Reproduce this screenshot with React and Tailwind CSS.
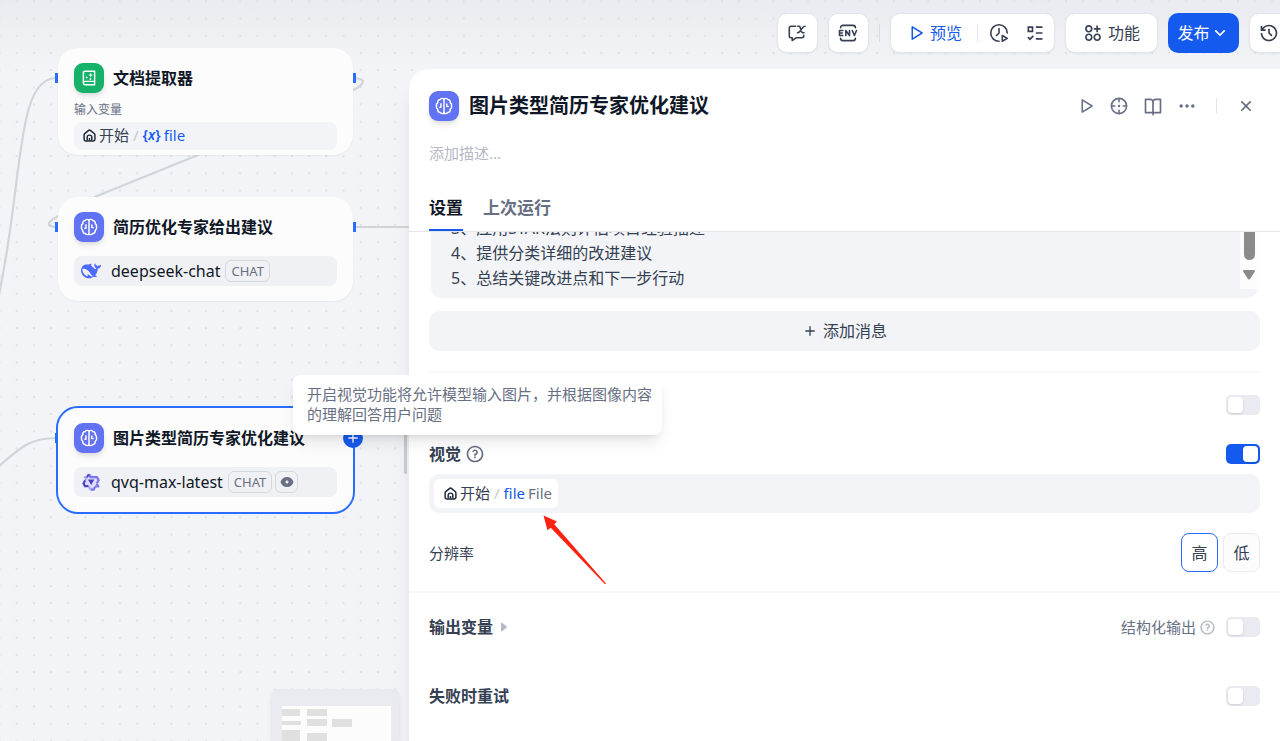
import { useState } from 'react'
import {
  RiAddLine,
  RiApps2AddLine,
  RiArrowDownSLine,
  RiBookOpenLine,
  RiCloseLine,
  RiHistoryLine,
  RiListCheck3,
  RiMoreFill,
  RiPlayLargeLine,
  RiQuestionLine,
} from 'react-icons/ri'

const prompt = `3、应用STAR法则评估项目经验描述
4、提供分类详细的改进建议
5、总结关键改进点和下一步行动`

function LlmIcon() {
  return (
    <span className="flex size-[30px] shrink-0 items-center justify-center rounded-[9px] bg-[#6172f3] text-white shadow-md">
      <svg viewBox="0 0 16 16" className="size-[18px]" fill="none" stroke="currentColor" strokeWidth="1.3" strokeLinecap="round" strokeLinejoin="round">
        <path d="M8 1.900C7 .9 5.300 1 4.600 2.300 3.200 2.400 2.200 3.600 2.500 5 1.500 5.700 1 6.800 1.300 8c-.3 1.200.2 2.300 1.200 3-.3 1.400.7 2.600 2.100 2.700.7 1.300 2.400 1.400 3.400.4 1 1 2.700.9 3.400-.4 1.400-.1 2.400-1.300 2.100-2.700 1-.7 1.500-1.800 1.200-3 .3-1.200-.2-2.300-1.200-3 .3-1.400-.7-2.600-2.100-2.700C10.700 1 9 .9 8 1.900Z" />
        <path d="M8 2v12M5.300 6v3.200H4.300M10.500 6.300v2.200h1.200" />
      </svg>
    </span>
  )
}

function DocIcon() {
  return (
    <span className="flex size-[30px] shrink-0 items-center justify-center rounded-[9px] bg-[#17b26a] text-white shadow-md">
      <svg viewBox="0 0 16 16" className="size-[18px]" fill="none" stroke="currentColor" strokeWidth="1.3" strokeLinejoin="round">
        <path d="M3 12.300V3.200C3 2.500 3.500 2 4.200 2H13v12H4.500C3.700 14 3 13.300 3 12.300c0-.8.7-1.300 1.500-1.300H13" />
        <path d="M9.500 3.300l.6 1.500 1.500.6-1.500.6-.6 1.500-.6-1.500-1.500-.6 1.500-.6zM6 6.300l.4.900.9.4-.9.400L6 8.900l-.4-.9-.9-.4.900-.4z" fill="currentColor" stroke="none" />
        <circle cx="9.300" cy="8.900" r=".8" fill="currentColor" stroke="none" />
      </svg>
    </span>
  )
}

function HomeIcon() {
  return (
    <svg viewBox="0 0 14 14" className="size-[13px] text-[#1d2939]" fill="none" stroke="currentColor" strokeWidth="1.600" strokeLinejoin="round">
      <path d="M1.200 6.400c0-.6.2-1.100.7-1.500l3.900-3.200c.7-.6 1.700-.6 2.400 0l3.900 3.200c.5.4.7.9.7 1.500v4.900c0 1-.6 1.500-1.500 1.500H2.700c-.9 0-1.500-.5-1.500-1.500z" />
      <path d="M4.500 12.500V9c0-1.400 1-2.400 2.500-2.400S9.500 7.600 9.500 9v3.500M7 9.800v2.700" />
    </svg>
  )
}

function DeepseekIcon() {
  return (
    <svg viewBox="0 0 24 24" className="size-5 text-[#4d6bfe]" fill="currentColor">
      <path fillRule="evenodd" d="M23.748 4.482c-.254-.124-.364.113-.512.234-.051.039-.094.09-.137.136-.372.397-.806.657-1.373.626-.829-.046-1.537.214-2.163.848-.133-.782-.575-1.248-1.247-1.548-.352-.156-.708-.311-.955-.65-.172-.241-.219-.51-.305-.774-.055-.16-.11-.323-.293-.35-.2-.031-.278.136-.356.276-.313.572-.434 1.202-.422 1.84.027 1.436.633 2.58 1.838 3.393.137.093.172.187.129.323-.082.28-.18.552-.266.833-.055.179-.137.217-.329.14a5.526 5.526 0 01-1.736-1.18c-.857-.828-1.631-1.742-2.597-2.458a11.365 11.365 0 00-.689-.471c-.985-.957.13-1.743.388-1.836.27-.098.093-.432-.779-.428-.872.004-1.67.295-2.687.684a3.055 3.055 0 01-.465.137 9.597 9.597 0 00-2.883-.102c-1.885.21-3.39 1.102-4.497 2.623C.082 8.606-.231 10.684.152 12.85c.403 2.284 1.569 4.175 3.36 5.653 1.858 1.533 3.997 2.284 6.438 2.14 1.482-.085 3.133-.284 4.994-1.86.47.234.962.327 1.78.397.63.059 1.236-.03 1.705-.128.735-.156.684-.837.419-.961-2.155-1.004-1.682-.595-2.113-.926 1.096-1.296 2.746-2.642 3.392-7.003.05-.347.007-.565 0-.845-.004-.17.035-.237.23-.256a4.173 4.173 0 001.545-.475c1.396-.763 1.96-2.015 2.093-3.517.02-.23-.004-.467-.247-.588zM11.581 18c-2.089-1.642-3.102-2.183-3.52-2.16-.392.024-.321.471-.235.763.09.288.207.486.371.739.114.167.192.416-.113.603-.673.416-1.842-.14-1.897-.167-1.361-.802-2.5-1.86-3.301-3.307-.774-1.393-1.224-2.887-1.298-4.482-.02-.386.093-.522.477-.592a4.696 4.696 0 011.529-.039c2.132.312 3.946 1.265 5.468 2.774.868.86 1.525 1.887 2.202 2.891.72 1.066 1.494 2.082 2.48 2.914.348.292.625.514.891.677-.802.09-2.14.11-3.054-.614z" />
    </svg>
  )
}

function QwenIcon() {
  return (
    <svg viewBox="0 0 20 20" className="size-5" fill="none" strokeLinejoin="round">
      <path d="M7.500 1.800 5.700 5H2.200l1.700 3.300L2 11.500l1.700 3h3.500l1.900 3.500h3.500l1.600-3.300h3.500l-1.800-3.200 2-3.300-1.800-3h-3.600L10.800 2z" fill="#dddcf8" />
      <path d="M8 2.200 9.500 5.200h6.600l1.600 3-2 3.300M9.400 17.700h3.200l1.600-3M14.200 14.500h3.200l-1.700-3" stroke="#7a74ee" strokeWidth="2.200" />
      <path d="M2.800 5.200h3.100L4.200 8.300 2.500 11.500l1.500 2.800h3.500l1.900 3.400" stroke="#a5a1f2" strokeWidth="1.800" />
      <path d="M7.800 2.200 6 5.200M4 8.500l-1.500 3L4 14.300l3.300-.2" stroke="#4a3fc4" strokeWidth="2" />
      <path d="M7 7.600h6.300L10.200 13z" fill="#4a3fc4" />
    </svg>
  )
}

function VisionBadge() {
  return (
    <span className="flex h-[22px] w-[23px] items-center justify-center rounded-md border border-[#d5d8df]">
      <svg viewBox="0 0 14 14" className="size-[14px]">
        <path d="M7 2C3.800 2 1.300 4 .5 7c.8 3 3.300 5 6.500 5s5.700-2 6.500-5C12.700 4 10.200 2 7 2Z" fill="#676f83" />
        <path d="M7 4.800 7.700 6.300 9.200 7l-1.500.7L7 9.200l-.7-1.500L4.800 7l1.500-.7Z" fill="#fff" />
      </svg>
    </span>
  )
}

function Handle({ className }) {
  return <span className={`absolute h-[10px] w-[3px] bg-[#296dff] ${className}`} />
}

function NodeTitle({ icon, children }) {
  return (
    <div className="flex items-center gap-[9px]">
      {icon}
      <h3 className="text-[16px] leading-5 font-semibold text-[#101828]">{children}</h3>
    </div>
  )
}

function ModelRow({ icon, name, children }) {
  return (
    <div className="mt-[14px] flex h-[30px] items-center rounded-lg bg-[#f0f1f5] pl-[7px]">
      {icon}
      <span className="ml-[10px] text-[16px] leading-5 text-[#101828]">{name}</span>
      <span className="ml-[5px] flex gap-[3px]">
        <span className="flex h-[22px] items-center rounded-md border border-[#d5d8df] px-[5px] text-[13px] leading-4 text-[#676f83]">CHAT</span>
        {children}
      </span>
    </div>
  )
}

function Canvas() {
  return (
    <div className="absolute inset-0 overflow-hidden">
      <div className="h-[69px] bg-linear-to-b from-[#e9ebf0] to-[#f2f4f7]" />
      <svg className="absolute inset-0 size-full" fill="none">
        <defs>
          <pattern id="dots" x="8.100" y="-7.300" width="17.200" height="17.200" patternUnits="userSpaceOnUse">
            <circle cx="8.600" cy="8.600" r="1.200" fill="#dfe1e7" />
          </pattern>
        </defs>
        <rect width="100%" height="100%" fill="url(#dots)" />
        <g stroke="#d0d5dc" strokeWidth="2.200">
          <path d="M56 78C14 78 24 190-4 308" />
          <path d="M355 78C372 80 360 88 335 99L198 155 97 196 65 213C44 222 46 227 56 227" />
          <path d="M355 227H420" />
          <path d="M-2 467C20 448 30 438 56 438" />
        </g>
      </svg>

      <div className="absolute top-[48px] left-[58px] w-[295px] rounded-[20px] bg-[#fcfcfd] px-4 pt-[15px] pb-[5px] shadow-xs">
        <Handle className="top-[25px] -left-[3px]" />
        <Handle className="top-[25px] -right-[3px]" />
        <NodeTitle icon={<DocIcon />}>文档提取器</NodeTitle>
        <div className="mt-2 text-[12px] leading-[18px] text-[#676f83]">输入变量</div>
        <div className="mt-[3px] flex h-[28px] items-center rounded-lg bg-[#f2f4f7] pb-[2px] pl-[9px] text-[15px] leading-5">
          <HomeIcon />
          <span className="ml-[3px] text-[#354052]">开始</span>
          <span className="mx-1 text-[#c3c8d1]">/</span>
          <span className="text-[14px] font-semibold text-[#155aef]">{'{'}<i>x</i>{'}'}</span>
          <span className="ml-[3px] text-[#155aef]">file</span>
        </div>
      </div>

      <div className="absolute top-[197px] left-[58px] w-[295px] rounded-[20px] bg-[#fcfcfd] px-4 py-[15px] shadow-xs">
        <Handle className="top-[25px] -left-[3px]" />
        <Handle className="top-[25px] -right-[3px]" />
        <NodeTitle icon={<LlmIcon />}>简历优化专家给出建议</NodeTitle>
        <ModelRow icon={<DeepseekIcon />} name="deepseek-chat" />
      </div>

      <div className="absolute top-[406px] left-[56px] w-[299px] rounded-[22px] border-2 border-[#296dff] bg-[#fcfcfd] px-4 py-[15px]">
        <Handle className="top-[25px] -left-[3px]" />
        <button aria-label="添加节点" className="absolute top-[20px] -right-[10px] flex size-5 items-center justify-center rounded-full bg-[#155aef] text-white">
          <RiAddLine className="size-4" />
        </button>
        <NodeTitle icon={<LlmIcon />}>图片类型简历专家优化建议</NodeTitle>
        <ModelRow icon={<QwenIcon />} name="qvq-max-latest">
          <VisionBadge />
        </ModelRow>
      </div>

      <svg className="absolute bottom-0 left-[272px] h-[52px] w-[127px] rounded-t-md bg-[#e9ebf0] shadow-md" viewBox="0 0 127 52">
        <rect x="10" y="17" width="109" height="35" fill="#fcfcfd" />
        <path fill="#e0e0e0" d="M10 20h18v7H10zM35 20h20v7H35zM10 32h19v4H10zM35 30h20v7H35zM60 30h20v8H60zM10 41h18v11H10zM35 44h20v8H35z" />
      </svg>
    </div>
  )
}

const boxButton = 'flex h-10 items-center justify-center rounded-[10px] border border-[#e3e5ea] bg-white text-[#354052] shadow-xs'

function Toolbar() {
  return (
    <header className="relative flex h-[69px] items-start justify-end pt-[13px]">
      <div className="mr-[-9px] flex shrink-0 items-center gap-[10px] text-[16px] leading-5">
        <button aria-label="会话变量" className={`${boxButton} w-[41px]`}>
          <svg viewBox="0 0 20 20" className="size-5" fill="none" stroke="currentColor" strokeWidth="1.600" strokeLinecap="round" strokeLinejoin="round">
            <path d="M8.500 3.300H4C3 3.300 2.300 4 2.300 5v8c0 1 .7 1.700 1.700 1.700h1.200v2.800l4.300-2.800H15c1 0 1.700-.7 1.700-1.700v-.8" />
            <path d="M10.700 3.300h1.200c.7 0 1 .3 1.200.9l1.500 4.600c.2.6.5.9 1.200.9h1.200M18 3.300c-1.200 0-1.700.5-2.400 1.500l-2.900 3.700c-.6.800-1.200 1.200-2.200 1.200" />
          </svg>
        </button>
        <button aria-label="环境变量" className={`${boxButton} w-[41px]`}>
          <svg viewBox="0 0 20 20" className="size-5" fill="none" stroke="currentColor" strokeWidth="1.600" strokeLinecap="round" strokeLinejoin="round">
            <path d="M2.600 4.800C2.600 3.200 3.400 2.400 5 2.400h10c1.600 0 2.400.8 2.400 2.400M2.600 15.200c0 1.600.8 2.400 2.400 2.400h10c1.600 0 2.400-.8 2.400-2.400" />
            <path d="M4.800 7.500H1.500v5h3.300M1.500 10h2.800M7.800 12.500v-5l3.700 5v-5M14.300 7.500l2.100 5 2.100-5" />
          </svg>
        </button>
        <span className="h-[18px] w-px bg-[#d9dce3]" />
        <div className="flex h-10 items-center rounded-[10px] border border-[#e3e5ea] bg-white text-[#354052] shadow-xs">
          <button className="flex items-center gap-[5px] pr-[15px] pl-4 text-[#155aef]">
            <RiPlayLargeLine className="size-[18px]" />
            预览
          </button>
          <span className="h-[18px] w-px bg-[#e3e5ea]" />
          <button aria-label="运行历史" className="ml-[11px]">
            <svg viewBox="0 0 20 20" className="size-5" fill="none" stroke="currentColor" strokeWidth="1.600" strokeLinecap="round" strokeLinejoin="round">
              <path d="M10 18.300A8.300 8.300 0 1 1 18.300 10M10 5.500V10l-2.500 2.500" />
              <path d="M13.300 12.500v5.800l5-2.900z" />
            </svg>
          </button>
          <button aria-label="检查清单" className="mr-[9px] ml-[16px]">
            <RiListCheck3 className="size-5" />
          </button>
        </div>
        <button className={`${boxButton} w-[93px] gap-[5px]`}>
          <RiApps2AddLine className="size-5" />
          功能
        </button>
        <button className="flex h-10 w-[71px] items-center justify-center rounded-[10px] bg-[#155aef] text-white">
          发布
          <RiArrowDownSLine className="size-5" />
        </button>
        <button aria-label="版本历史" className={`${boxButton} w-10`}>
          <RiHistoryLine className="size-5" />
        </button>
      </div>
    </header>
  )
}

function Toggle({ label, defaultChecked }) {
  return (
    <input
      type="checkbox"
      role="switch"
      aria-label={label}
      defaultChecked={defaultChecked}
      className="relative h-5 w-[34px] shrink-0 appearance-none rounded-[5px] bg-[#e9ebf0] before:absolute before:top-[2px] before:left-[2px] before:h-4 before:w-[15px] before:rounded-[4px] before:bg-white before:shadow-sm checked:bg-[#155aef] checked:before:left-[17px]"
    />
  )
}

function PanelHeader() {
  const [tab, setTab] = useState('设置')

  return (
    <div className="border-b border-[#e3e5ea] px-5 pt-[22px]">
      <div className="flex items-center">
        <LlmIcon />
        <h2 className="ml-[10px] flex-1 text-[20px] leading-[30px] font-semibold text-[#101828]">图片类型简历专家优化建议</h2>
        <div className="flex items-center gap-[14px] pr-1 text-[#676f83]">
          <button aria-label="运行此步骤"><RiPlayLargeLine className="size-[18px]" /></button>
          <button aria-label="定位">
            <svg viewBox="0 0 20 20" className="size-5" fill="none" stroke="currentColor" strokeWidth="1.600" strokeLinecap="round">
              <circle cx="10" cy="10" r="7.600" />
              <path d="M10 2.600v3.200M10 14.200v3.200M2.600 10h3.200M14.200 10h3.200" />
              <circle cx="10" cy="10" r="1.200" fill="currentColor" stroke="none" />
            </svg>
          </button>
          <button aria-label="帮助文档"><RiBookOpenLine className="size-5" /></button>
          <button aria-label="更多"><RiMoreFill className="size-5" /></button>
          <span className="ml-[5px] h-4 w-px bg-[#e3e5ea]" />
          <button aria-label="关闭" className="ml-[5px]"><RiCloseLine className="size-5" /></button>
        </div>
      </div>
      <input
        aria-label="描述"
        placeholder="添加描述..."
        className="mt-5 block h-6 w-full text-[15px] leading-6 outline-none placeholder:text-[#b4b9c5]"
      />
      <div className="mt-6 flex gap-5 text-[17px] leading-[38px] font-semibold">
        {['设置', '上次运行'].map(name => (
          <button
            key={name}
            onClick={() => setTab(name)}
            className={tab === name ? 'border-b-2 border-[#155aef] pb-[2px] text-[#101828]' : 'border-b-2 border-transparent pb-[2px] text-[#676f83]'}>
            {name}
          </button>
        ))}
      </div>
    </div>
  )
}

function Panel() {
  const [resolution, setResolution] = useState('高')

  return (
    <section className="relative ml-[409px] flex min-h-0 flex-1 flex-col rounded-tl-[20px] bg-white shadow-xl">
      <PanelHeader />
      <div className="min-h-0 flex-1 overflow-hidden">
        <div className="px-5">
          <div className="mx-[2px] flex h-[66px] items-end overflow-hidden rounded-b-[10px] bg-[#f2f4f7] pb-[7px] pl-5">
            <textarea
              aria-label="提示词"
              defaultValue={prompt}
              className="h-[75px] flex-1 resize-none overflow-hidden text-[16px] leading-[25px] text-[#354052] outline-none"
            />
            <div className="mb-[2px] flex h-[57px] w-[18px] flex-col items-center bg-[#fcfcfc]">
              <span className="h-[28px] w-[11px] rounded-b-full bg-[#8b8b8b]" />
              <svg viewBox="0 0 12 10" className="mt-[10px] h-[10px] w-3">
                <path d="M1.200 0h9.600c1 0 1.400.9.900 1.700L7.200 8.800c-.6.900-1.800.9-2.400 0L.3 1.700C-.2.900.2 0 1.200 0Z" fill="#8b8b8b" />
              </svg>
            </div>
          </div>
          <button className="mt-[13px] flex h-10 w-full items-center justify-center gap-[5px] rounded-[10px] bg-[#f2f4f7] text-[16px] leading-5 text-[#354052]">
            <RiAddLine className="size-4" />
            添加消息
          </button>
          <div className="mt-5 h-[2px] bg-[#f7f8fa]" />
          <div className="mt-[22px] flex justify-end">
            <Toggle label="记忆" />
          </div>
          <div className="mt-[29px] flex h-5 items-center">
            <h4 className="text-[16px] leading-5 font-semibold text-[#354052]">视觉</h4>
            <RiQuestionLine className="ml-1 size-5 text-[#676f83]" />
            <span className="flex-1" />
            <Toggle label="视觉" defaultChecked />
          </div>
          <div className="mt-[10px] flex h-[39px] items-center rounded-[10px] bg-[#f2f4f7] px-[5px]">
            <div className="flex h-[29px] items-center rounded-md bg-white pr-[6px] pb-px pl-[10px] text-[15px] leading-5">
              <HomeIcon />
              <span className="ml-[3px] text-[#354052]">开始</span>
              <span className="mx-1 text-[#c3c8d1]">/</span>
              <span className="text-[#155aef]">file</span>
              <span className="ml-[3px] text-[#676f83]">File</span>
            </div>
          </div>
          <div className="mt-5 flex items-center gap-[5px]">
            <span className="flex-1 text-[15px] leading-5 text-[#354052]">分辨率</span>
            {['高', '低'].map(level => (
              <button
                key={level}
                onClick={() => setResolution(level)}
                className={
                  resolution === level
                    ? 'h-[39px] w-[37px] rounded-lg border border-[#296dff] bg-white text-[16px] text-[#354052]'
                    : 'h-[39px] w-[37px] rounded-lg border border-[#e9ebf0] bg-[#fcfcfd] text-[16px] text-[#354052]'
                }>
                {level}
              </button>
            ))}
          </div>
        </div>
        <div className="mt-[19px] h-[2px] bg-[#f7f8fa]" />
        <div className="px-5">
          <div className="mt-6 flex h-5 items-center">
            <h4 className="text-[16px] leading-5 font-semibold text-[#354052]">输出变量</h4>
            <svg viewBox="0 0 8 10" className="ml-[7px] h-[10px] w-2">
              <path d="M1 1.500C1 .7 1.700.5 2.300.9L6.300 4c.7.5.7 1.500 0 2L2.300 9.100C1.700 9.500 1 9.300 1 8.500Z" fill="#b4b9c5" />
            </svg>
            <span className="flex-1 text-right text-[15px] leading-5 text-[#676f83]">结构化输出</span>
            <RiQuestionLine className="mr-[10px] ml-[3px] size-[17px] text-[#b4b9c5]" />
            <Toggle label="结构化输出" />
          </div>
          <div className="mt-[49px] flex h-5 items-center justify-between">
            <h4 className="text-[16px] leading-5 font-semibold text-[#354052]">失败时重试</h4>
            <Toggle label="失败时重试" />
          </div>
        </div>
      </div>
    </section>
  )
}

function App() {
  return (
    <div className="relative flex h-screen flex-col overflow-hidden bg-[#f2f4f7] font-['Noto_Sans','Noto_Sans_CJK_SC',sans-serif]">
      <Canvas />
      <Toolbar />
      <Panel />
      <span className="absolute top-[433px] left-[404px] h-[41px] w-[3px] rounded-full bg-[#c3c8d1]" />
      <div role="tooltip" className="absolute top-[375px] left-[293px] w-[369px] rounded-lg bg-white pt-[9px] pb-[11px] pl-[14px] text-[15px] leading-5 text-[#676f83] shadow-lg">
        开启视觉功能将允许模型输入图片，并根据图像内容的理解回答用户问题
      </div>
      <svg className="absolute top-[514px] left-[542px] h-[72px] w-[66px]" viewBox="0 0 66 72">
        <path d="M1.500 1.500 15 7.500 12.300 10.300 64 69.500 63 70.300 8.700 13.700 5.500 16.300Z" fill="#ff2211" />
      </svg>
    </div>
  )
}

export default App
